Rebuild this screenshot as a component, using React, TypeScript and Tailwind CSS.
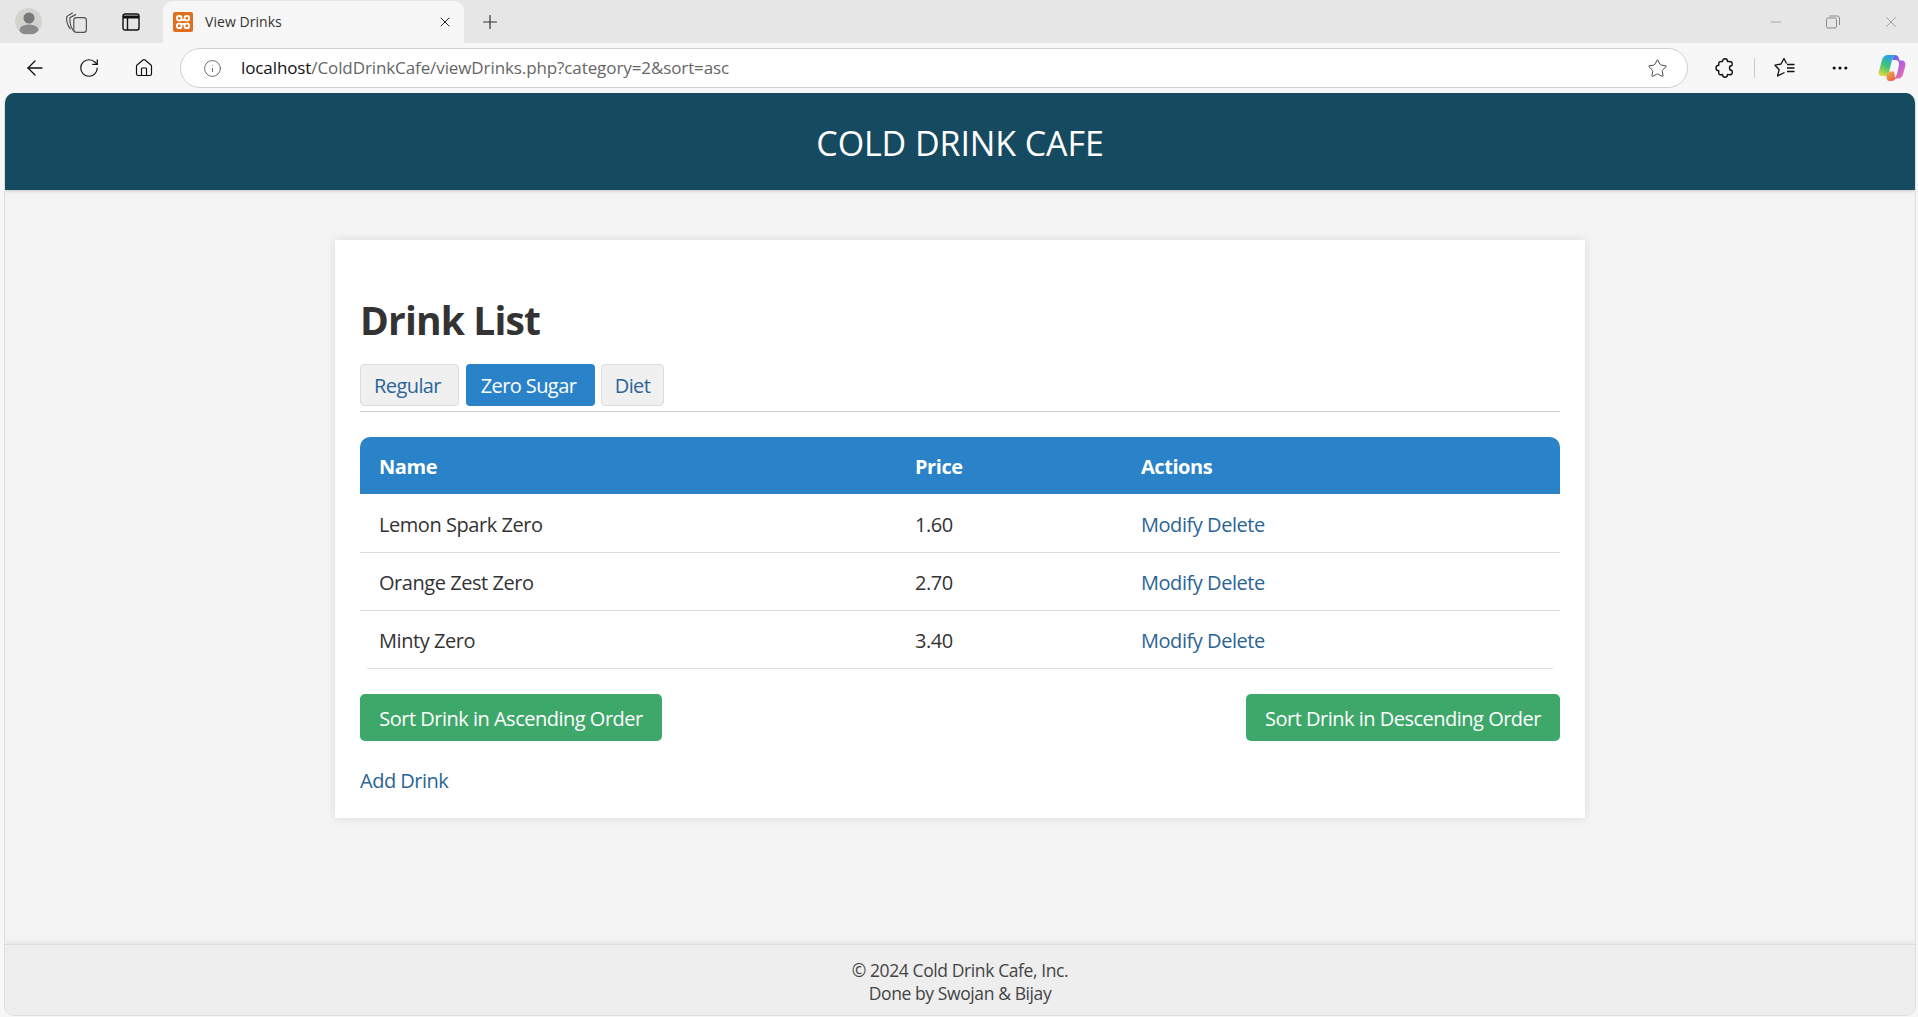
import { ArrowLeft, RotateCw, Home, Info, Star, Plus, X, Minus, MoreHorizontal } from 'lucide-react'

const drinks = [
  { name: 'Lemon Spark Zero', price: '1.60' },
  { name: 'Orange Zest Zero', price: '2.70' },
  { name: 'Minty Zero', price: '3.40' },
]

function ProfileIcon() {
  return (
    <div className="flex h-[27px] w-[27px] items-center justify-center overflow-hidden rounded-full bg-[#d3d2cf]">
      <svg width="22" height="24" viewBox="0 0 22 24">
        <circle cx="11" cy="8" r="5.5" fill="#787878" />
        <ellipse cx="11" cy="20" rx="9.5" ry="5.5" fill="#8a8a8a" />
      </svg>
    </div>
  )
}

function CollectionsIcon() {
  return (
    <svg width="24" height="24" viewBox="0 0 22 22" fill="none" stroke="#555" strokeWidth="1.1">
      <path d="M6 17.5 C3 14 2 10 2.500 6 L8 2.500" />
      <path d="M9 19.500 C6 15.500 5 11 5.500 7 L11 4" />
      <rect x="9" y="7" width="11.5" height="13.5" rx="2.5" />
    </svg>
  )
}

function TabsIcon() {
  return (
    <svg width="18" height="18" viewBox="0 0 18 18" fill="none" stroke="#111" strokeWidth="1.4">
      <rect x="1" y="1" width="16" height="16" rx="2" />
      <path d="M1 2.5 h16 v3 H1z" fill="#111" stroke="none" />
      <path d="M5.500 5 V17" />
    </svg>
  )
}

function XamppIcon() {
  return (
    <div className="flex h-5 w-5 items-center justify-center rounded-[2px] bg-[#e0701e]">
      <svg width="14" height="14" viewBox="0 0 14 14" fill="none" stroke="#fff" strokeWidth="1.9">
        <rect x="1" y="1" width="4.4" height="4.4" rx="1.6" />
        <rect x="8.6" y="1" width="4.4" height="4.4" rx="1.6" />
        <rect x="1" y="8.6" width="4.4" height="4.4" rx="1.6" />
        <rect x="8.6" y="8.6" width="4.4" height="4.4" rx="1.6" />
        <path d="M5 5 L9 5 M5 9 L9 9" />
      </svg>
    </div>
  )
}

function ExtensionsIcon() {
  return (
    <svg width="22" height="22" viewBox="0 0 22 22" fill="none" stroke="#111" strokeWidth="1.4" strokeLinejoin="round">
      <path d="M8.500 4.500 C8.500 3 9.600 1.800 11 1.800 C12.400 1.800 13.500 3 13.500 4.500 C15 4.500 17.500 4.200 18 5.500 C18.400 6.800 18 8 18 8.500 C16.500 8.500 15.500 9.500 15.500 11 C15.500 12.500 16.500 13.500 18 13.500 C18.500 15 18.200 17 17 17.500 C15.800 18 14.500 17.500 13.500 17.500 C13.500 19 12.400 20.200 11 20.200 C9.600 20.200 8.500 19 8.500 17.500 C7 18 5.300 18 4.800 16.500 C4.500 15.500 4.800 14.500 4.800 13.800 C3.300 13.800 2 12.600 2 11 C2 9.400 3.300 8.200 4.800 8.200 C4.800 7 4.300 5.500 5.500 4.800 C6.500 4.300 7.500 4.500 8.500 4.500Z" />
    </svg>
  )
}

function FavoritesIcon() {
  return (
    <svg width="22" height="22" viewBox="0 0 22 22" fill="none" stroke="#111" strokeWidth="1.3" strokeLinejoin="round">
      <path d="M12.500 6.500 L10 1.500 L7 7 L1 8.200 L5.200 12.700 L3.500 19 L10.500 15.500" />
      <path d="M13 7.500 H20.500 M13 11 H20.500 M13 14.500 H20.500" />
    </svg>
  )
}

function CopilotIcon() {
  return (
    <svg width="28" height="28" viewBox="0 0 28 28">
      <defs>
        <linearGradient id="copilotLeft" x1="0.6" y1="0" x2="0.2" y2="1">
          <stop offset="0" stopColor="#2a9fe8" />
          <stop offset="0.5" stopColor="#3fc47a" />
          <stop offset="1" stopColor="#e6d93a" />
        </linearGradient>
        <linearGradient id="copilotRight" x1="0.1" y1="0" x2="0.7" y2="1">
          <stop offset="0" stopColor="#4a6cea" />
          <stop offset="0.5" stopColor="#b45ce2" />
          <stop offset="1" stopColor="#ea6fb0" />
        </linearGradient>
        <linearGradient id="copilotBottom" x1="0" y1="0" x2="1" y2="1">
          <stop offset="0" stopColor="#f4b84c" />
          <stop offset="1" stopColor="#e64a3c" />
        </linearGradient>
      </defs>
      <path d="M10 1 H17 C15 2 14.500 4 14 6 L11 18 C10.500 20.500 9 22 6.500 22 H3.500 C1.500 22 .3 20 .8 18 L3.800 6.500 C4.600 3 7 1 10 1Z" fill="url(#copilotLeft)" />
      <path d="M17 1 C19 1 20.500 2.500 21 4.500 L21.500 6.500 H24 C26.500 6.500 28 9 27.300 12 L25 20.500 C24.300 23 22.500 24.500 20 24.500 L17 24.500 C18 23 18.500 21.500 19 20 L21 11 C21.500 8 20 6 17 6 H14.200 C14.800 3.500 15.500 1.500 17 1Z" fill="url(#copilotRight)" />
      <path d="M8.500 20.500 C10 20 11 19 11.300 17.500 L16 17.500 L17 24.500 L19 20 C18.500 24 17 27 13.500 27 H11 C9 27 8 24 8.500 20.500Z" fill="url(#copilotBottom)" />
    </svg>
  )
}

export default function App() {
  return (
    <div className="flex h-[1017px] flex-col overflow-hidden bg-[#f7f7f7] font-['Open_Sans',sans-serif]">
      {/* Browser title bar */}
      <div className="flex h-[43px] items-center bg-[#e6e6e6]">
        <div className="ml-[15px] flex w-[148px] items-center">
          <ProfileIcon />
          <div className="ml-[22px]"><CollectionsIcon /></div>
          <div className="ml-[34px]"><TabsIcon /></div>
        </div>
        <div className="mt-[1px] flex h-[42px] w-[301px] items-center self-end rounded-t-[10px] bg-[#f7f7f7] pl-[10px] pr-[11px]">
          <XamppIcon />
          <span className="ml-3 flex-1 pb-[2px] text-[14px] tracking-[0.05px] text-[#333]">View Drinks</span>
          <X size={16} strokeWidth={1.5} className="text-[#222]" />
        </div>
        <Plus size={22} strokeWidth={1.3} className="ml-[15px] text-[#333]" />
        <div className="ml-auto flex items-center gap-[41px] pr-[18px] text-[#8a8a8a]">
          <Minus size={16} strokeWidth={1} />
          <svg width="16" height="16" viewBox="0 0 16 16" fill="none" stroke="currentColor" strokeWidth="1">
            <rect x="1.500" y="4" width="10" height="10" rx="1.500" />
            <path d="M4.500 2 H12.500 a2 2 0 0 1 2 2 V11" />
          </svg>
          <X size={18} strokeWidth={1} />
        </div>
      </div>

      {/* Toolbar */}
      <div className="flex h-[50px] items-center bg-[#f7f7f7]">
        <ArrowLeft size={24} strokeWidth={1.3} className="ml-[23px] text-[#111]" />
        <RotateCw size={22} strokeWidth={1.3} className="ml-[31px] text-[#111]" />
        <Home size={20} strokeWidth={1.4} className="ml-[34px] text-[#111]" />
        <div className="ml-[26px] flex h-[40px] w-[1508px] items-center rounded-full border border-[#cfcfcf] bg-white pl-[22px] pr-[19px]">
          <Info size={19} strokeWidth={1.1} className="text-[#555]" />
          <span className="ml-[19px] text-[17px] tracking-[-0.1px] text-[#111]">
            localhost<span className="text-[#666]">/ColdDrinkCafe/viewDrinks.php?category=2&amp;sort=asc</span>
          </span>
          <Star size={21} strokeWidth={1.1} className="ml-auto text-[#444]" />
        </div>
        <div className="ml-[26px]"><ExtensionsIcon /></div>
        <div className="ml-[18px] h-[20px] w-px bg-[#c8c8c8]" />
        <div className="ml-[19px]"><FavoritesIcon /></div>
        <MoreHorizontal size={20} strokeWidth={1.8} className="ml-[34px] text-[#111]" />
        <div className="ml-[28px]"><CopilotIcon /></div>
      </div>

      {/* Page */}
      <div className="mb-px ml-[4px] mr-[2px] flex flex-1 flex-col overflow-hidden rounded-[10px] border-x border-b border-[#dedede] bg-[#f4f4f4]">
        <header className="flex h-[97px] items-center justify-center bg-[#164a60] pt-[3px] text-[34px] tracking-[-0.1px] text-white shadow-[0_1px_3px_rgba(0,0,0,0.2)]">
          COLD DRINK CAFE
        </header>

        <main className="flex flex-1 justify-center pt-[50px]">
          <div className="h-[578px] w-[1250px] bg-white px-[25px] shadow-[0_0_10px_rgba(0,0,0,0.1)]">
            <h1 className="mt-[56px] text-[39px] leading-[48px] font-bold tracking-[-0.85px] text-[#333]">Drink List</h1>

            <div className="mt-[20px] flex items-start gap-[6px] border-b border-[#ccc] pb-[5px] text-[20px] leading-[40px]">
              <a className="flex h-[42px] w-[99px] items-center justify-center rounded-[4px] border border-[#ddd] bg-[#f0f0f0] pr-[4px] pt-[2px] tracking-[-0.6px] text-[#2a6496]">Regular</a>
              <a className="ml-px flex h-[42px] w-[129px] items-center justify-center rounded-[4px] bg-[#2a83c9] pr-[4px] pt-[2px] tracking-[-0.6px] text-white">Zero Sugar</a>
              <a className="flex h-[42px] w-[63px] items-center justify-center rounded-[4px] border border-[#ddd] bg-[#f0f0f0] pt-[2px] tracking-[-0.6px] text-[#2a6496]">Diet</a>
            </div>

            <table className="mt-[25px] w-full table-fixed border-collapse text-left text-[20px] tracking-[-0.45px]">
              <thead>
                <tr className="h-[57px] font-bold text-white">
                  <th className="w-[536px] rounded-tl-[10px] bg-[#2a83c9] pl-[19px] pt-[2px]">Name</th>
                  <th className="w-[226px] bg-[#2a83c9] pl-[19px] pt-[2px]">Price</th>
                  <th className="rounded-tr-[10px] bg-[#2a83c9] pl-[19px] pt-[2px]">Actions</th>
                </tr>
              </thead>
              <tbody className="text-[#333]">
                {drinks.map((d, i) => (
                  <tr key={d.name} className={i < 2 ? 'h-[58px] border-b border-[#ddd]' : 'h-[58px]'}>
                    <td className="pl-[19px] pt-[4px]">{d.name}</td>
                    <td className="pl-[19px] pt-[4px]">{d.price}</td>
                    <td className="pl-[19px] pt-[4px] text-[#2a6496]">
                      <a>Modify</a> <a>Delete</a>
                    </td>
                  </tr>
                ))}
              </tbody>
            </table>
            <div className="mx-[7px] h-px bg-[#ddd]" />

            <div className="mt-[25px] flex justify-between text-[20px] tracking-[-0.5px] text-white">
              <button className="h-[47px] w-[302px] rounded-[5px] bg-[#3ea76a] pt-[2px]">Sort Drink in Ascending Order</button>
              <button className="h-[47px] w-[314px] rounded-[5px] bg-[#3ea76a] pt-[2px]">Sort Drink in Descending Order</button>
            </div>

            <a className="mt-[26px] block text-[20px] leading-[27px] tracking-[-0.5px] text-[#2a6496]">Add Drink</a>
          </div>
        </main>

        <footer className="flex h-[71px] flex-col items-center justify-center border-t border-[#dcdcdc] bg-[#eeeeee] pt-[4px] text-[17.5px] leading-[23px] tracking-[-0.4px] text-[#444] shadow-[0_-2px_4px_rgba(0,0,0,0.07)]">
          <p>© 2024 Cold Drink Cafe, Inc.</p>
          <p>Done by Swojan &amp; Bijay</p>
        </footer>
      </div>
    </div>
  )
}
